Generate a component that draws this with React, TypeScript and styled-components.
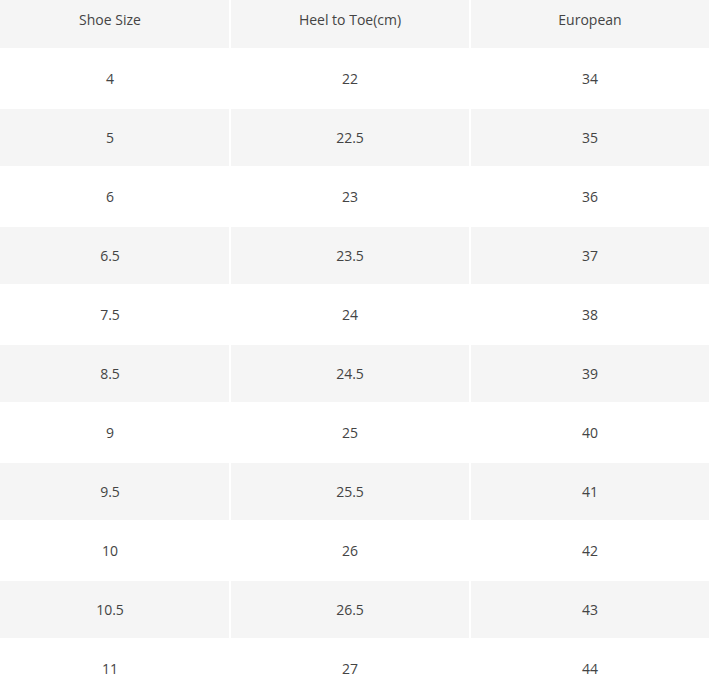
import React from "react";
import styled, { createGlobalStyle } from "styled-components";

const Global = createGlobalStyle`
  html, body { margin: 0; padding: 0; background: #fff; overflow: hidden; }
  body { font-family: "Open Sans", "Liberation Sans", sans-serif; }
`;

const Table = styled.div`
  display: grid;
  grid-template-columns: 238px 238px 238px;
  grid-auto-rows: 57px;
  gap: 2px;
  margin: -9px 0 0 -9px;
`;

const Cell = styled.div<{ $shade: boolean }>`
  display: flex;
  align-items: center;
  justify-content: center;
  background: ${(p) => (p.$shade ? "#f5f5f5" : "#ffffff")};
  color: #444;
  font-size: 14px;
  line-height: 1;
`;

const header = ["Shoe Size", "Heel to Toe(cm)", "European"];
const rows: string[][] = [
  ["4", "22", "34"],
  ["5", "22.5", "35"],
  ["6", "23", "36"],
  ["6.5", "23.5", "37"],
  ["7.5", "24", "38"],
  ["8.5", "24.5", "39"],
  ["9", "25", "40"],
  ["9.5", "25.5", "41"],
  ["10", "26", "42"],
  ["10.5", "26.5", "43"],
  ["11", "27", "44"],
];

export default function App() {
  return (
    <>
      <Global />
      <Table>
        {header.map((h) => (
          <Cell key={h} $shade>
            {h}
          </Cell>
        ))}
        {rows.map((r, i) =>
          r.map((v, j) => (
            <Cell key={`${i}-${j}`} $shade={i % 2 === 1}>
              {v}
            </Cell>
          ))
        )}
      </Table>
    </>
  );
}
